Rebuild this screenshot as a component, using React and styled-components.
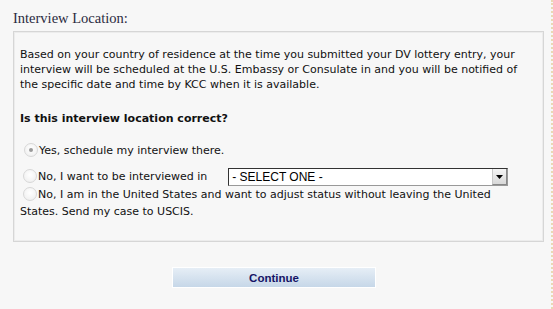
import React from 'react';
import styled, { createGlobalStyle } from 'styled-components';

const GlobalStyle = createGlobalStyle`
  html, body {
    margin: 0;
    padding: 0;
    background: #f7f7f7;
  }
`;

const Page = styled.div`
  position: relative;
  width: 553px;
  height: 309px;
  box-sizing: border-box;
  padding: 10px 0 0 13px;
  background: #f7f7f7;
  border-right: 2px dotted #ead9b4;
`;

const Title = styled.div`
  font-family: "Liberation Serif", "Times New Roman", serif;
  font-size: 14.5px;
  color: #2a2a40;
  line-height: 17px;
  margin-bottom: 4px;
`;

const Panel = styled.div`
  width: 531px;
  height: 211px;
  box-sizing: border-box;
  border: 1px solid #d6d6d6;
  box-shadow: inset 0 0 0 1px #ececec;
  padding: 15px 14px 0 6px;
  font-family: "DejaVu Sans", Verdana, sans-serif;
  font-size: 11px;
  color: #111;
`;

const Intro = styled.p`
  margin: 0;
  line-height: 15px;
`;

const Question = styled.p`
  margin: 19px 0 0 0;
  font-weight: bold;
  line-height: 15px;
`;

const Options = styled.div`
  margin-top: 17px;
  display: flex;
  flex-direction: column;
`;

const Option = styled.div`
  line-height: ${p => p.lh || 15}px;
  margin-top: ${p => p.gap || 0}px;
`;

const Radio = styled.span`
  display: inline-block;
  vertical-align: -3px;
  width: 12px;
  height: 12px;
  margin: 0 1px 0 ${p => p.indent || 3}px;
  border-radius: 50%;
  border: 1px solid #d8d8d8;
  background: radial-gradient(circle at 50% 40%, #ffffff 0%, #f2f2f2 70%, #e4e4e4 100%);
  position: relative;

  &::after {
    content: '';
    display: ${p => (p.checked ? 'block' : 'none')};
    position: absolute;
    left: 4px;
    top: 4px;
    width: 4px;
    height: 4px;
    border-radius: 50%;
    background: #9a9a9a;
  }
`;

const Select = styled.span`
  display: inline-flex;
  align-items: center;
  vertical-align: middle;
  box-sizing: border-box;
  width: 280px;
  height: 18px;
  margin-left: 21px;
  border: 1px solid #333;
  border-right-color: #999;
  border-bottom-color: #999;
  background: #fff;
  font-family: "Liberation Sans", Arial, sans-serif;
  font-size: 12px;
  color: #000;
  padding-left: 3px;
  justify-content: space-between;
`;

const Arrow = styled.span`
  width: 15px;
  height: 16px;
  box-sizing: border-box;
  background: linear-gradient(#f4f4f4, #d8d8d8);
  border-left: 1px solid #c8c8c8;
  border-right: 1px solid #888;
  border-bottom: 1px solid #888;
  display: flex;
  align-items: center;
  justify-content: center;
`;

const Footer = styled.div`
  display: flex;
  padding: 25px 0 0 159px;
`;

const Button = styled.button`
  width: 204px;
  height: 21px;
  border: 1px solid #fff;
  background: linear-gradient(#e6eef6, #c6d7e8);
  font-family: "Liberation Sans", Arial, sans-serif;
  font-weight: bold;
  font-size: 11.5px;
  color: #141466;
  padding: 0;
  cursor: pointer;
`;

export default function App() {
  return (
    <>
      <GlobalStyle />
      <Page>
        <Title>Interview Location:</Title>
        <Panel>
          <Intro>
            Based on your country of residence at the time you submitted your DV lottery entry, your
            interview will be scheduled at the U.S. Embassy or Consulate in and you will be notified of
            the specific date and time by KCC when it is available.
          </Intro>
          <Question>Is this interview location correct?</Question>
          <Options>
            <Option>
              <Radio checked indent={4} />Yes, schedule my interview there.
            </Option>
            <Option gap={10}>
              <Radio />No, I want to be interviewed in
              <Select>
                - SELECT ONE -
                <Arrow>
                  <svg width="7" height="4" viewBox="0 0 7 4">
                    <path d="M0 0h7L3.5 4z" fill="#000" />
                  </svg>
                </Arrow>
              </Select>
            </Option>
            <Option lh={17}>
              <Radio />No, I am in the United States and want to adjust status without leaving the United
              States. Send my case to USCIS.
            </Option>
          </Options>
        </Panel>
        <Footer>
          <Button>Continue</Button>
        </Footer>
      </Page>
    </>
  );
}
